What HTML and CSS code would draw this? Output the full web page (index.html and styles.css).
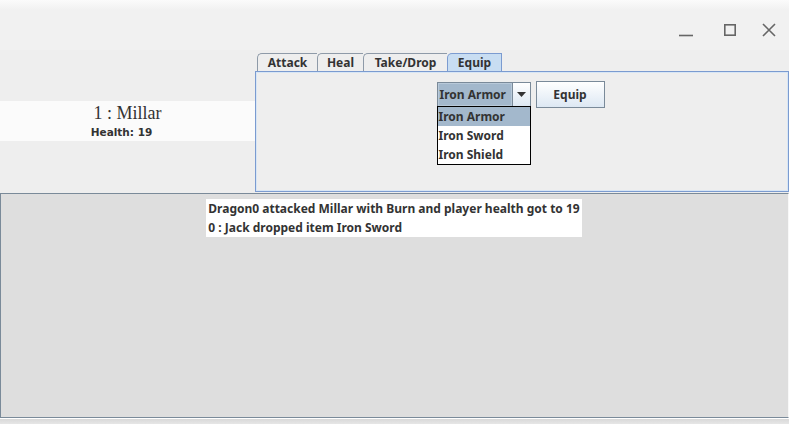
FILE: index.html
```html
<!DOCTYPE html>
<html>
<head>
<meta charset="utf-8">
<link rel="stylesheet" href="styles.css">
</head>
<body>
<div class="window">
  <div class="shadow-top"></div>
  <div class="titlebar">
    <div class="tb-btn tb-min">
      <svg width="14" height="14" viewBox="0 0 14 14"><path d="M0 12.5H14" stroke="#666" stroke-width="1.6" fill="none"/></svg>
    </div>
    <div class="tb-btn tb-max">
      <svg width="14" height="14" viewBox="0 0 14 14"><rect x="1.8" y="1.8" width="10.4" height="10.4" stroke="#666" stroke-width="1.6" fill="none"/></svg>
    </div>
    <div class="tb-btn tb-close">
      <svg width="14" height="14" viewBox="0 0 14 14"><path d="M1 1L13 13M13 1L1 13" stroke="#666" stroke-width="1.6" fill="none"/></svg>
    </div>
  </div>
  <div class="content">
    <div class="top">
      <div class="player">
        <div class="band">
          <div class="pname">1 : Millar</div>
          <div class="phealth">Health: 19</div>
        </div>
      </div>
      <div class="tabbed">
        <div class="tabs">
          <div class="tab t-attack">Attack</div>
          <div class="tab t-heal">Heal</div>
          <div class="tab t-take">Take/Drop</div>
          <div class="tab t-equip selected">Equip</div>
        </div>
        <div class="tabpanel">
          <div class="equip-row">
            <div class="combo-wrap">
              <div class="combo">
                <div class="combo-value">Iron Armor</div>
                <div class="combo-arrow"><svg width="9" height="5" viewBox="0 0 9 5"><path d="M0 0H9L4.5 5Z" fill="#333"/></svg></div>
              </div>
              <div class="popup">
                <div class="item hl">Iron Armor</div>
                <div class="item">Iron Sword</div>
                <div class="item">Iron Shield</div>
              </div>
            </div>
            <div class="button">Equip</div>
          </div>
        </div>
      </div>
    </div>
    <div class="bottom">
      <div class="log">
        <div class="line">Dragon0 attacked Millar with Burn and player health got to 19</div>
        <div class="line">0 : Jack dropped item Iron Sword</div>
      </div>
    </div>
  </div>
  <div class="shadow-bottom"></div>
</div>
</body>
</html>
```

FILE: styles.css
```css
html, body {
  margin: 0;
  padding: 0;
  background: #f0f0f0;
  font-family: "Noto Sans", "DejaVu Sans", sans-serif;
}
.window {
  width: 789px;
  height: 424px;
  display: flex;
  flex-direction: column;
  overflow: hidden;
}
.shadow-top {
  height: 10px;
  background: linear-gradient(#fbfbfb, #f1f1f1);
}
.titlebar {
  height: 40px;
  background: #f1f1f1;
  display: flex;
  justify-content: flex-end;
  align-items: center;
  padding-right: 13px;
  box-sizing: border-box;
}
.tb-btn {
  width: 14px;
  height: 14px;
  display: flex;
}
.tb-max { margin-left: 30px; }
.tb-close { margin-left: 25px; }
.content {
  flex: 1;
  display: flex;
  flex-direction: column;
  background: #eeeeee;
}
.top {
  height: 143px;
  display: flex;
}
.player {
  width: 255px;
  padding-top: 51px;
  box-sizing: border-box;
}
.band {
  height: 40px;
  background: #fbfbfb;
  display: flex;
  flex-direction: column;
  align-items: center;
}
.pname {
  font-family: "Liberation Serif", "DejaVu Serif", serif;
  font-size: 18px;
  line-height: 20px;
  color: #333;
  margin-top: 2px;
}
.phealth {
  font-family: "DejaVu Sans", sans-serif;
  font-weight: bold;
  font-size: 10.5px;
  line-height: 14px;
  color: #333;
  margin-top: 2px;
  margin-left: -12px;
}
.tabbed {
  flex: 1;
  display: flex;
  flex-direction: column;
  padding-top: 3px;
}
.tabs {
  display: flex;
  padding-left: 2px;
  height: 18px;
}
.tab {
  height: 18px;
  box-sizing: border-box;
  border: 1px solid #8e9aa8;
  border-bottom: none;
  border-right: none;
  border-top-left-radius: 5px;
  font-size: 12px;
  font-weight: bold;
  color: #333;
  line-height: 17px;
  text-align: center;
  background: #eeeeee;
}
.t-attack { width: 60px; }
.t-heal { width: 46px; }
.t-take { width: 84px; }
.t-equip { width: 55px; }
.tab.selected {
  background: #c8ddf2;
  border: 1px solid #7b9bd0;
  border-bottom: none;
}
.tabpanel {
  flex: 1;
  border: 1px solid #7b9bd0;
  box-shadow: inset 0 0 0 1px #d8e6f5;
  background: #eeeeee;
  display: flex;
  justify-content: center;
  padding-top: 9px;
  box-sizing: border-box;
  margin-bottom: 1px;
}
.equip-row {
  display: flex;
  gap: 5px;
  align-items: flex-start;
  margin-left: -3px;
  height: 26px;
}
.combo-wrap {
  position: relative;
  margin-top: 1px;
}
.combo {
  width: 94px;
  height: 25px;
  box-sizing: border-box;
  border: 1px solid #7a8a99;
  display: flex;
  background: #a3b8cc;
}
.combo-value {
  flex: 1;
  font-size: 12px;
  font-weight: bold;
  color: #333;
  line-height: 21px;
  padding-left: 1px;
  border: 1px solid #b8c9d9;
  background: #a3b8cc;
}
.combo-arrow {
  width: 18px;
  border-left: 1px solid #7a8a99;
  background: linear-gradient(#ffffff, #dde8f3);
  display: flex;
  align-items: center;
  justify-content: center;
  box-sizing: border-box;
}
.popup {
  position: absolute;
  top: 24px;
  left: 0;
  width: 94px;
  box-sizing: border-box;
  border: 1px solid #000;
  background: #fff;
}
.item {
  height: 19px;
  font-size: 12px;
  font-weight: bold;
  color: #333;
  line-height: 19px;
  padding-left: 1px;
}
.item.hl {
  background: #a3b8cc;
}
.button {
  width: 69px;
  height: 27px;
  box-sizing: border-box;
  border: 1px solid #7a8a99;
  background: linear-gradient(#ffffff, #dde8f3);
  font-size: 12px;
  font-weight: bold;
  color: #333;
  text-align: center;
  line-height: 25px;
}
.bottom {
  flex: 1;
  border-top: 1px solid #7a8a99;
  border-left: 1px solid #7a8a99;
  border-bottom: 1px solid #7a8a99;
  border-right: 1px solid #f8f8f8;
  background: #dedede;
  display: flex;
  justify-content: center;
  align-items: flex-start;
  padding-top: 5px;
}
.log {
  background: #ffffff;
  padding: 0 2px;
  margin-left: -1px;
}
.line {
  font-size: 12px;
  font-weight: bold;
  color: #333;
  line-height: 19px;
  white-space: nowrap;
}
.shadow-bottom {
  height: 6px;
  border-top: 1px solid #ffffff;
  background: linear-gradient(#d9d9d9, #e6e6e6);
  box-sizing: border-box;
}
```
